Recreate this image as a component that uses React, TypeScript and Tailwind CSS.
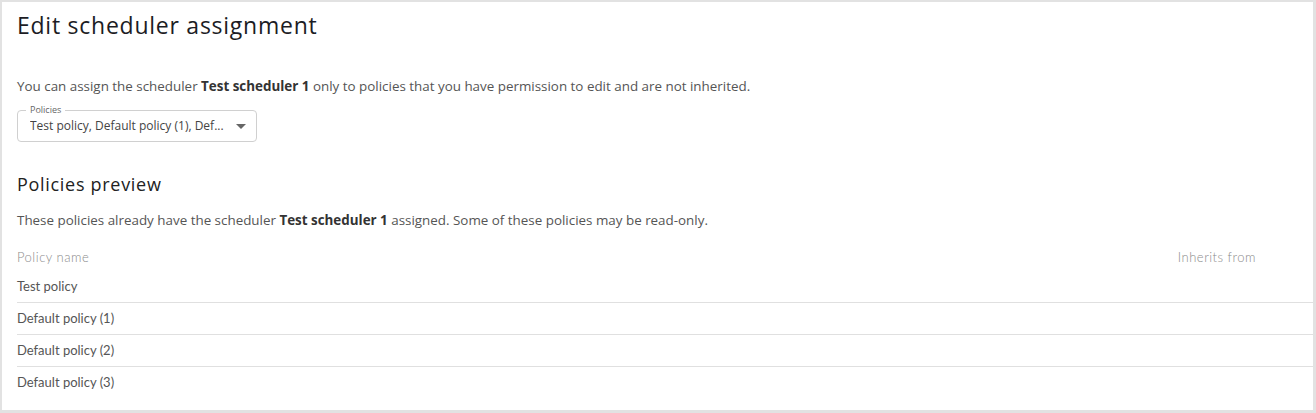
const rows = ['Test policy', 'Default policy (1)', 'Default policy (2)', 'Default policy (3)'];

export default function App() {
  return (
    <div className="w-[1316px] h-[413px] bg-[#e2e2e2] pt-[2px] pl-[2px] pr-[3px] pb-[3px]">
      <div className="h-[408px] bg-white pl-[15px] pt-[8px] text-[#555]" style={{ fontFamily: '"Open Sans", sans-serif' }}>
        <h1 className="text-[23px] leading-[30px] text-[#1c1c24] tracking-[0.75px]">
          Edit scheduler assignment
        </h1>

        <p className="mt-[36px] text-[13.4px] leading-[20px]">
          You can assign the scheduler <b className="font-bold text-[#333]">Test scheduler 1</b> only to policies that you have permission to edit and are not inherited.
        </p>

        <div className="relative mt-[14px] w-[240px] h-[32px] border border-[#d0d0d0] rounded-[4px] flex items-center pl-[12px] pr-[10px]">
          <span className="absolute -top-[8px] left-[8px] bg-white px-[4px] text-[9px] leading-[14px] text-[#666]">Policies</span>
          <span className="flex-1 text-[12px] text-[#444] truncate">Test policy, Default policy (1), Def...</span>
          <svg width="10" height="5" viewBox="0 0 10 5" className="ml-[6px]">
            <path d="M0 0 L10 0 L5 5 Z" fill="#666" />
          </svg>
        </div>

        <h2 className="mt-[29px] text-[18px] leading-[26px] text-[#222] tracking-[0.7px]">
          Policies preview
        </h2>

        <p className="mt-[13px] text-[13.4px] leading-[20px]">
          These policies already have the scheduler <b className="font-bold text-[#333]">Test scheduler 1</b> assigned. Some of these policies may be read-only.
        </p>

        <div className="mt-[18px]" style={{ fontFamily: 'Lato, "Open Sans", sans-serif' }}>
          <div className="flex h-[20px] items-center text-[13px] text-[#8c8c8c] font-light tracking-[0.5px]">
            <span className="flex-1">Policy name</span>
            <span className="pr-[57px]">Inherits from</span>
          </div>
          <div className="mt-[3px]">
            {rows.map((r, i) => (
              <div
                key={r}
                className={`flex h-[32px] items-center text-[13px] text-[#555] ${i < rows.length - 1 ? 'border-b border-[#e0e0e0]' : ''}`}
              >
                {r}
              </div>
            ))}
          </div>
        </div>
      </div>
    </div>
  );
}
